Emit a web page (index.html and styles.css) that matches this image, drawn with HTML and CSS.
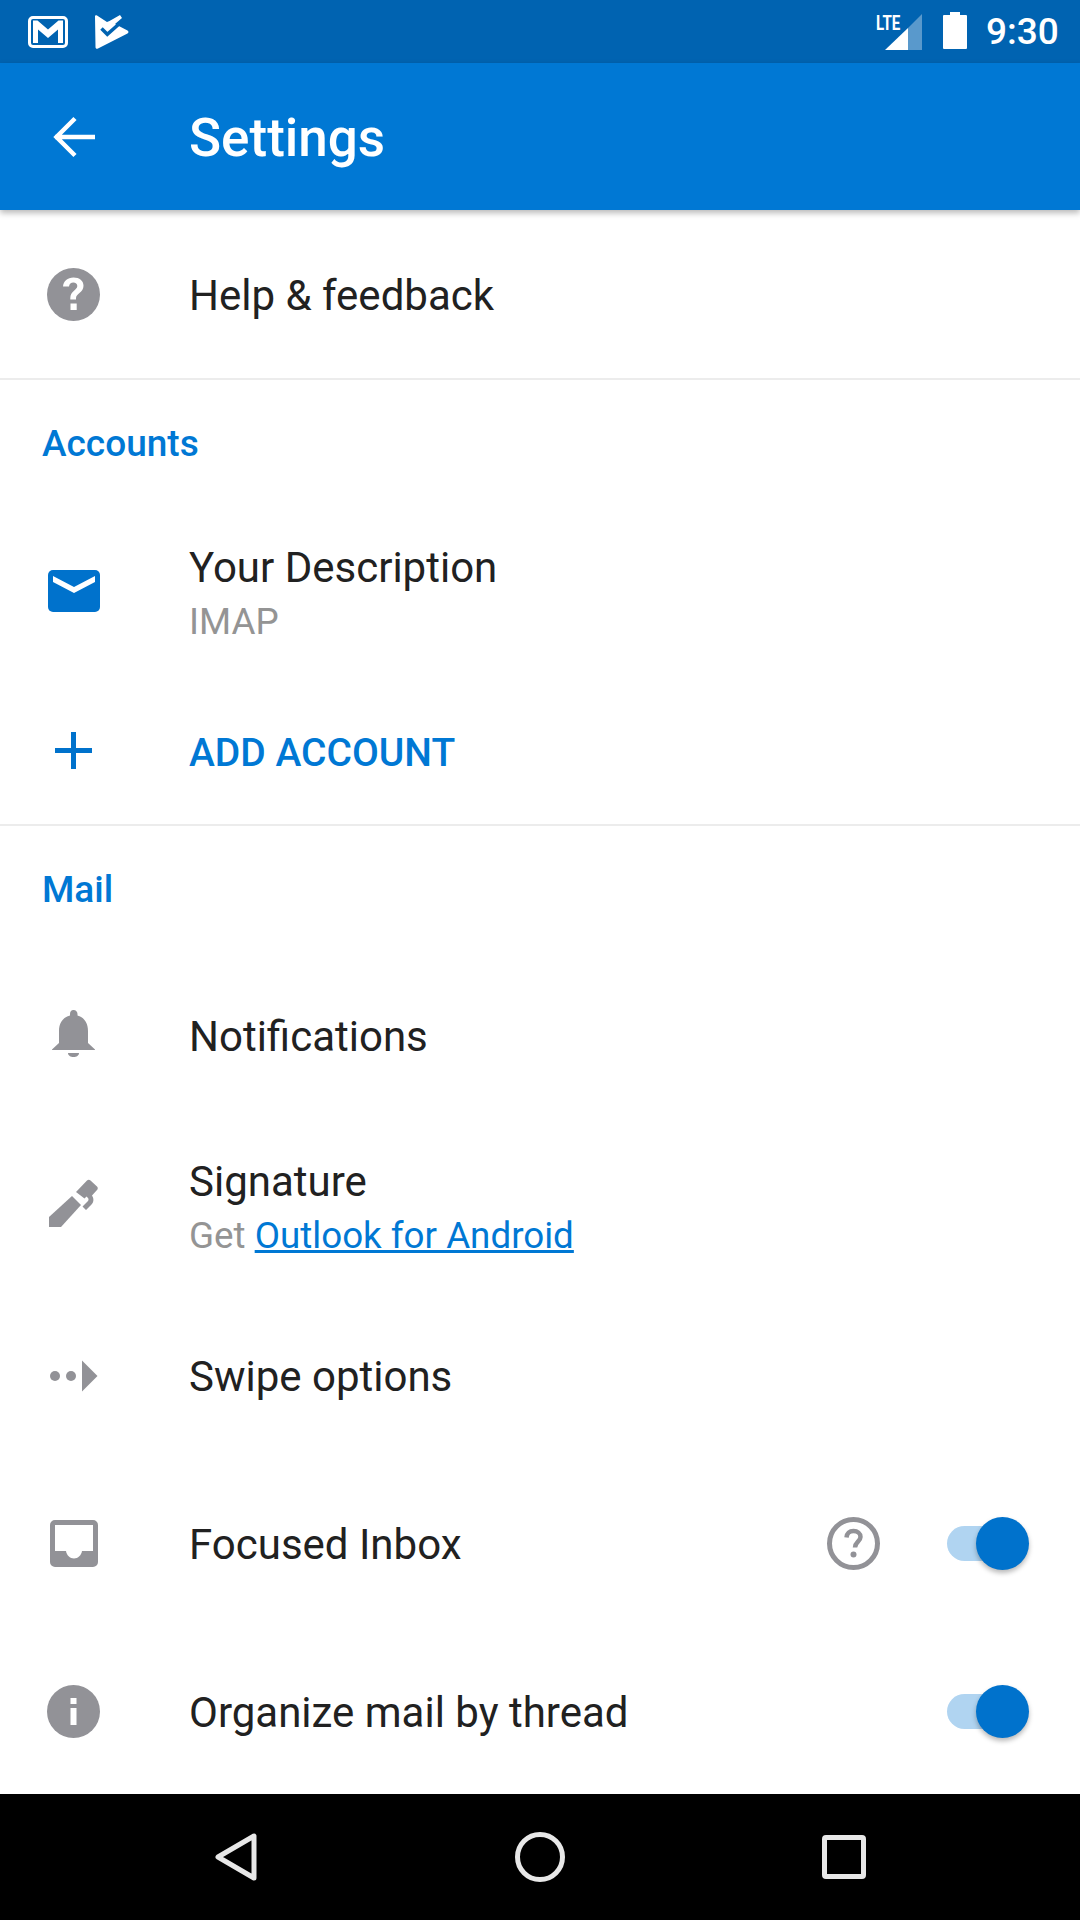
FILE: index.html
```html
<!DOCTYPE html>
<html lang="en">
<head>
<meta charset="utf-8">
<title>Settings</title>
<link rel="stylesheet" href="styles.css">
</head>
<body>
<div class="screen">
  <div class="status">
    <svg class="st-gmail" width="40" height="32" viewBox="0 0 40 32"><rect x="1.500" y="1.500" width="37" height="29" rx="3.500" fill="#0063b1" stroke="#fff" stroke-width="3"/><path d="M5 4.500h4.500L20 13.500l10.500-9H35V27h-5V13.500L20 22 10 13.500V27H5z" fill="#fff"/></svg>
    <svg class="st-tasks" width="34" height="34" viewBox="0 0 34 34"><path d="M0 1.500C0 .3 1 0 2 .5L12 7l2.500-1L25 0l2 3-7 6 12.500 6.500c1.300.8 1.300 2.200 0 3L3 33.500c-1.500.7-2.500 0-2.500-1.500z" fill="#fff"/><path d="M6.500 13.500l5.800 5.800L24 9" fill="none" stroke="#0063b1" stroke-width="3.500"/></svg>
    <div class="st-spacer"></div>
    <div class="st-signal">
      <svg width="37" height="36" viewBox="0 0 37 36"><path d="M0 36 23 14v22z" fill="#fff"/><path d="M23 14 37 0v36H23z" fill="#fff" fill-opacity=".35"/></svg>
      <span class="lte">LTE</span>
    </div>
    <svg class="st-batt" width="24" height="37" viewBox="0 0 24 37"><path d="M7 0h10v3h6a1 1 0 0 1 1 1v32a1 1 0 0 1-1 1H1a1 1 0 0 1-1-1V4a1 1 0 0 1 1-1h6z" fill="#fff"/></svg>
    <span class="time">9:30</span>
  </div>
  <header class="toolbar">
    <div class="icon-col">
      <svg width="42" height="42" viewBox="0 0 42 42"><path d="M2 21h40M22 2.500 3.500 21 22 39.500" fill="none" stroke="#fff" stroke-width="4.500"/></svg>
    </div>
    <h1 class="title">Settings</h1>
  </header>
  <main class="list">
    <div class="row row-help">
      <div class="icon-col">
        <svg width="53" height="53" viewBox="0 0 53 53"><circle cx="26.500" cy="26.500" r="26.500" fill="#929297"/><path d="M26.500 9.500c-6 0-10 3.500-10.500 9h6c.3-2.500 2-4 4.300-4 2.400 0 4 1.500 4 3.500 0 4-7 5-7 12v1.500h5.700V30c0-4.500 7.500-5.500 7.500-12.300 0-5-4-8.200-10-8.200zM23.500 35.500h6.200v6.500h-6.200z" fill="#fff"/></svg>
      </div>
      <span class="label">Help &amp; feedback</span>
    </div>
    <div class="divider"></div>
    <div class="section">Accounts</div>
    <div class="row row-account">
      <div class="icon-col">
        <svg class="lift" width="52" height="42" viewBox="0 0 52 42"><rect width="52" height="42" rx="5" fill="#0072cc"/><path d="M5 6 26 17 47 6v6L26 23 5 12z" fill="#fff"/></svg>
      </div>
      <div class="stack">
        <span class="label">Your Description</span>
        <span class="sub">IMAP</span>
      </div>
    </div>
    <div class="row row-add">
      <div class="icon-col">
        <svg class="lift" width="37" height="37" viewBox="0 0 37 37"><path d="M16 0h5v16h16v5H21v16h-5V21H0v-5h16z" fill="#0072cc"/></svg>
      </div>
      <span class="action">ADD ACCOUNT</span>
    </div>
    <div class="divider"></div>
    <div class="section">Mail</div>
    <div class="row row-notif">
      <div class="icon-col">
        <svg class="lift" width="43" height="47" viewBox="0 0 43 47"><path d="M21.500 0c2.500 0 4 1.700 4 4v1.500C32.500 7.500 36 13.500 36 21v12l7 6.500V40H0v-.5L7 33V21c0-7.500 3.500-13.500 11-15.500V4c0-2.300 1-4 3.500-4z" fill="#929297"/><path d="M16 43h11c0 2.500-2.500 4-5.500 4S16 45.500 16 43z" fill="#929297"/></svg>
      </div>
      <span class="label">Notifications</span>
    </div>
    <div class="row row-sign">
      <div class="icon-col">
        <svg class="lift-more" width="49" height="48" viewBox="0 0 49 48"><path d="M0 38 23 17l9 9-20 22H0z" fill="#929297"/><path d="M27 13 38 1.500c1-1 2.500-1 3.500 0l6.500 6c1 1 1 2.500 0 3.500l-5 5.500c2 3 2 6.500-.5 9L37 31l-3.500-3.500 5.500-5.500c.7-1 .7-2 0-3l-1.500-1.500-2 2z" fill="#929297"/></svg>
      </div>
      <div class="stack">
        <span class="label">Signature</span>
        <span class="sub">Get <a class="link" href="#">Outlook for Android</a></span>
      </div>
    </div>
    <div class="row row-swipe">
      <div class="icon-col">
        <svg width="48" height="36" viewBox="0 0 48 36"><circle cx="5" cy="18" r="5" fill="#929297"/><circle cx="21" cy="18" r="5" fill="#929297"/><path d="M32 2.500 47.500 18 32 33.500z" fill="#929297"/></svg>
      </div>
      <span class="label">Swipe options</span>
    </div>
    <div class="row row-focus">
      <div class="icon-col">
        <svg width="48" height="47" viewBox="0 0 48 47"><path d="M5 0h38a5 5 0 0 1 5 5v37a5 5 0 0 1-5 5H5a5 5 0 0 1-5-5V5a5 5 0 0 1 5-5zm0 5v26h11c.5 4 4 7.500 8 7.500s7.500-3.500 8-7.500h11V5z" fill="#929297" fill-rule="evenodd"/></svg>
      </div>
      <span class="label grow">Focused Inbox</span>
      <svg class="help-outline" width="53" height="53" viewBox="0 0 53 53"><circle cx="26.500" cy="26.500" r="24" fill="none" stroke="#929297" stroke-width="5"/><path d="M19.500 20.500c.3-4 3-6.500 7-6.500s7 2.500 7 6c0 4.500-5.500 5-5.500 10.500" fill="none" stroke="#929297" stroke-width="4.500"/><circle cx="26.500" cy="37.500" r="3" fill="#929297"/></svg>
      <div class="switch"><div class="track"></div><div class="thumb"></div></div>
    </div>
    <div class="row row-thread">
      <div class="icon-col">
        <svg width="53" height="53" viewBox="0 0 53 53"><circle cx="26.500" cy="26.500" r="26.500" fill="#929297"/><path d="M23.500 13h6v6h-6zM23.500 23h6v17h-6z" fill="#fff"/></svg>
      </div>
      <span class="label grow">Organize mail by thread</span>
      <div class="switch"><div class="track"></div><div class="thumb"></div></div>
    </div>
  </main>
  <nav class="navbar">
    <svg width="42" height="48" viewBox="0 0 42 48"><path d="M39 3v42L3 24z" fill="none" stroke="#e8e8e8" stroke-width="5" stroke-linejoin="round"/></svg>
    <svg width="50" height="50" viewBox="0 0 50 50"><circle cx="25" cy="25" r="22.500" fill="none" stroke="#e8e8e8" stroke-width="5"/></svg>
    <svg width="44" height="44" viewBox="0 0 44 44"><rect x="2.500" y="2.500" width="39" height="39" rx="1.500" fill="none" stroke="#e8e8e8" stroke-width="5"/></svg>
  </nav>
</div>
</body>
</html>
```
FILE: styles.css
```css
* { box-sizing: border-box; }
html, body { margin: 0; padding: 0; }
body { background: #fff; font-family: Roboto, "Liberation Sans", sans-serif; }
.screen { width: 1080px; height: 1920px; display: flex; flex-direction: column; overflow: hidden; background: #fff; }

.status { height: 63px; background: #0063b1; display: flex; align-items: center; padding: 0 22px 0 28px; flex: none; }
.st-gmail { margin-right: 27px; }
.st-spacer { flex: 1; }
.st-signal { position: relative; width: 37px; height: 36px; margin-right: 21px; }
.st-signal svg { display: block; }
.lte { position: absolute; left: -9px; top: -3px; color: #fff; font: 700 21px/24px Roboto, sans-serif; transform: scaleX(.72); transform-origin: left top; }
.st-batt { margin-right: 19px; margin-bottom: 2px; }
.time { color: #fff; font-size: 37px; font-weight: 500; line-height: 63px; width: 72px; }

.toolbar { height: 147px; background: #0078d4; display: flex; align-items: center; flex: none; position: relative; z-index: 1; box-shadow: 0 3px 6px rgba(0,0,0,.28); }
.icon-col { width: 189px; padding-right: 42px; flex: none; display: flex; justify-content: center; align-items: center; }
.icon-col svg { display: block; }
.icon-col .lift { position: relative; top: -3px; }
.icon-col .lift-more { position: relative; top: -5px; }
.title { margin: 0; color: #fff; font-size: 53px; font-weight: 500; line-height: 60px; padding-top: 2px; }

.list { flex: 1; display: flex; flex-direction: column; }
.row { display: flex; align-items: center; flex: none; padding-right: 51px; }
.row > .label { padding-top: 3px; }
.row-help { height: 168px; }
.row-help > .label { padding-top: 4px; }
.row-account { height: 176px; }
.row-add { height: 142px; }
.row-notif { height: 168px; }
.row-notif > .label { padding-top: 2px; }
.row-sign { height: 176px; }
.row-swipe { height: 159px; }
.row-focus { height: 176px; }
.row-thread { height: 160px; }
.divider { height: 2px; background: #ececec; flex: none; }
.section { height: 126px; padding: 41px 0 0 42px; color: #0078d4; font-size: 37px; font-weight: 500; line-height: 46px; flex: none; }
.label { color: #212121; font-size: 42px; line-height: 52px; }
.grow { flex: 1; }
.stack { display: flex; flex-direction: column; }
.sub { color: #949494; font-size: 36.750px; line-height: 50px; margin-top: 3px; }
.link { color: #0078d4; text-decoration: underline; }
.action { color: #0078d4; font-size: 39px; font-weight: 500; line-height: 48px; }
.help-outline { margin-right: 67px; }
.switch { position: relative; width: 82px; height: 53px; flex: none; }
.track { position: absolute; left: 0; top: 9px; width: 74px; height: 35px; border-radius: 18px; background: #b0d4f1; }
.thumb { position: absolute; right: 0; top: 0; width: 53px; height: 53px; border-radius: 50%; background: #0072cc; box-shadow: 0 3px 5px rgba(0,0,0,.28); }

.navbar { height: 126px; background: #000; display: flex; align-items: center; justify-content: space-between; padding: 0 214px 0 215px; flex: none; }
```
